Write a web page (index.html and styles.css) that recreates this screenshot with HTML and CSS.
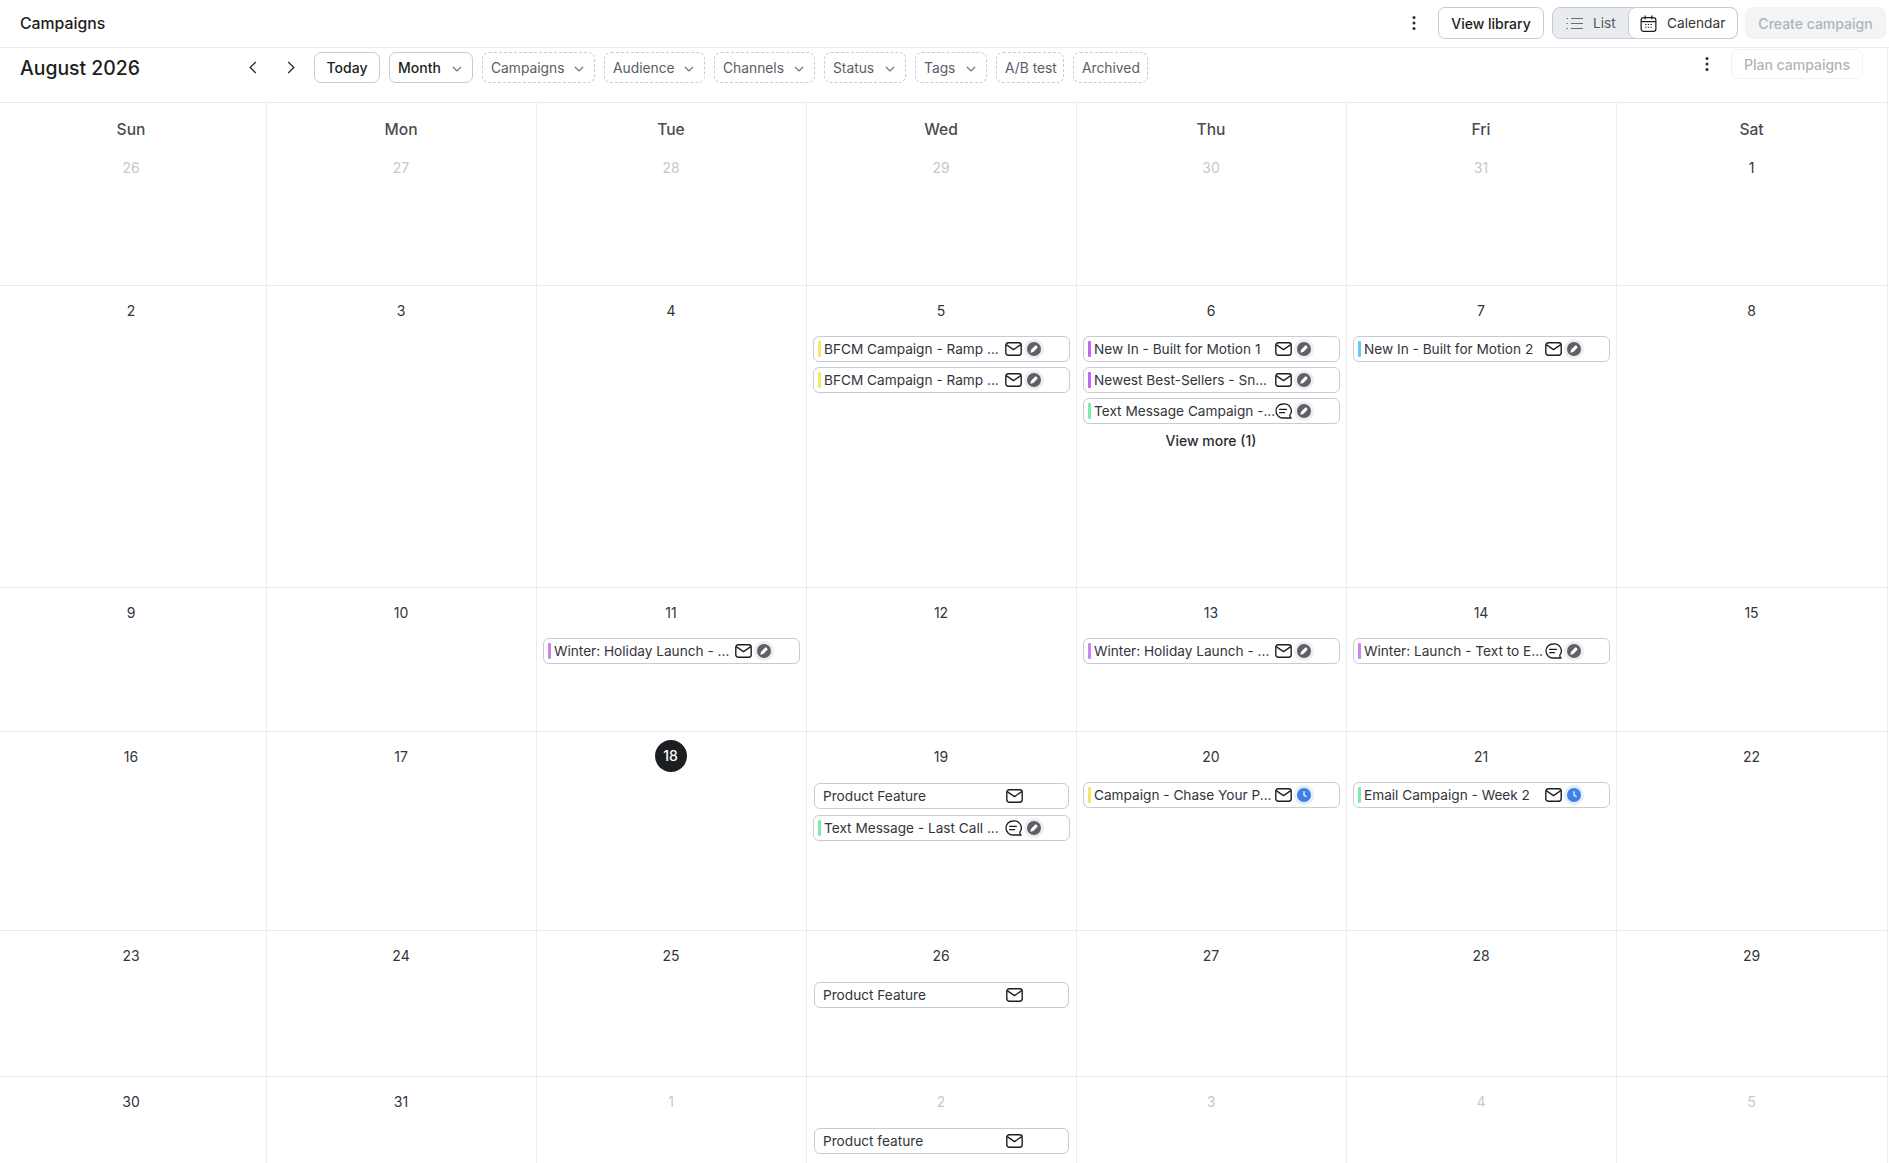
FILE: index.html
```html
<!DOCTYPE html>
<html lang="en">
<head>
  <meta charset="UTF-8">
  <title>Campaigns</title>
  <link rel="stylesheet" href="styles.css">
</head>
<body>

<!-- icon sprite -->
<svg class="sprite" aria-hidden="true">
  <symbol id="i-mail" viewBox="0 0 17 14">
    <rect x="0.8" y="0.8" width="15.4" height="12.4" rx="2.4" fill="none" stroke="currentColor" stroke-width="1.4"/>
    <path d="M1.2 2.6 8.5 7.6 15.8 2.6" fill="none" stroke="currentColor" stroke-width="1.3"/>
  </symbol>
  <symbol id="i-chat" viewBox="0 0 17 16">
    <path d="M8 1a7 7 0 1 0 0 14h8.2c-1.2-.6-1.6-1.6-1.4-2.8A7 7 0 0 0 8 1z" fill="none" stroke="currentColor" stroke-width="1.3" stroke-linejoin="round"/>
    <path d="M4.6 6.4h6.8M4.6 9.6h5" fill="none" stroke="currentColor" stroke-width="1.3" stroke-linecap="round"/>
  </symbol>
  <symbol id="i-draft" viewBox="0 0 20 20">
    <circle cx="10" cy="10" r="10" fill="#eceef1"/>
    <circle cx="10" cy="10" r="7" fill="#5e6066"/>
    <path d="M6.3 13.7l.8-3 3.9-3.9a1 1 0 0 1 1.5 0l.7.7a1 1 0 0 1 0 1.5l-3.9 3.9z" fill="#fff"/>
  </symbol>
  <symbol id="i-sched" viewBox="0 0 20 20">
    <circle cx="10" cy="10" r="10" fill="#e2eefc"/>
    <circle cx="10" cy="10" r="7" fill="#3f7fe6"/>
    <path d="M10 6.2v4l2.6 1.5" fill="none" stroke="#fff" stroke-width="1.3"/>
  </symbol>
  <symbol id="i-down" viewBox="0 0 10 6">
    <path d="M1 1l4 4 4-4" fill="none" stroke="currentColor" stroke-width="1.1"/>
  </symbol>
  <symbol id="i-dots" viewBox="0 0 4 16">
    <circle cx="2" cy="2.5" r="1.5"/><circle cx="2" cy="8" r="1.5"/><circle cx="2" cy="13.5" r="1.5"/>
  </symbol>
</svg>

<header class="topbar">
  <h1 class="page-title">Campaigns</h1>
  <div class="top-actions">
    <svg class="dots"><use href="#i-dots"/></svg>
    <button class="btn btn-strong lib-btn">View library</button>
    <div class="seg">
      <span class="seg-item">
        <svg class="seg-icon" viewBox="0 0 17 14"><path d="M5 2h12M5 7h12M5 12h12M0.5 2h1.5M0.5 7h1.5M0.5 12h1.5" fill="none" stroke="currentColor" stroke-width="1.2"/></svg>
        List
      </span>
      <span class="seg-item seg-on">
        <svg class="seg-icon" viewBox="0 0 17 18"><rect x="0.7" y="2.7" width="15.6" height="14.6" rx="2.5" fill="none" stroke="currentColor" stroke-width="1.3"/><path d="M0.7 7h15.6M5 0.5v4M12 0.5v4" fill="none" stroke="currentColor" stroke-width="1.3"/><path d="M5 10h1.4M7.8 10h1.4M10.6 10h1.4M5 13h1.4M7.8 13h1.4M10.6 13h1.4" fill="none" stroke="currentColor" stroke-width="1.2"/></svg>
        Calendar
      </span>
    </div>
    <button class="btn-create">Create campaign</button>
  </div>
</header>

<main class="panel">
  <div class="toolbar">
    <h2 class="month-title">August 2026</h2>
    <div class="pager">
      <svg class="arrow" viewBox="0 0 8 14"><path d="M7 1 1 7l6 6" fill="none" stroke="currentColor" stroke-width="1.4"/></svg>
      <svg class="arrow" viewBox="0 0 8 14"><path d="M1 1l6 6-6 6" fill="none" stroke="currentColor" stroke-width="1.4"/></svg>
    </div>
    <div class="filters">
      <button class="btn btn-strong btn-today">Today</button>
      <button class="btn btn-strong btn-month">Month <svg class="caret"><use href="#i-down"/></svg></button>
      <button class="chip chip-campaigns">Campaigns <svg class="caret"><use href="#i-down"/></svg></button>
      <button class="chip chip-audience">Audience <svg class="caret"><use href="#i-down"/></svg></button>
      <button class="chip chip-channels">Channels <svg class="caret"><use href="#i-down"/></svg></button>
      <button class="chip chip-status">Status <svg class="caret"><use href="#i-down"/></svg></button>
      <button class="chip chip-tags">Tags <svg class="caret"><use href="#i-down"/></svg></button>
      <button class="chip chip-ab">A/B test</button>
      <button class="chip chip-archived">Archived</button>
    </div>
    <div class="plan-side">
      <svg class="dots"><use href="#i-dots"/></svg>
      <button class="btn-plan">Plan campaigns</button>
    </div>
  </div>

  <div class="calendar">
    <div class="weekday">Sun</div>
    <div class="weekday">Mon</div>
    <div class="weekday">Tue</div>
    <div class="weekday">Wed</div>
    <div class="weekday">Thu</div>
    <div class="weekday">Fri</div>
    <div class="weekday">Sat</div>

    <div class="day first-week muted"><div class="num">26</div></div>
    <div class="day first-week muted"><div class="num">27</div></div>
    <div class="day first-week muted"><div class="num">28</div></div>
    <div class="day first-week muted"><div class="num">29</div></div>
    <div class="day first-week muted"><div class="num">30</div></div>
    <div class="day first-week muted"><div class="num">31</div></div>
    <div class="day first-week"><div class="num">1</div></div>

    <div class="day"><div class="num">2</div></div>
    <div class="day"><div class="num">3</div></div>
    <div class="day"><div class="num">4</div></div>
    <div class="day">
      <div class="num">5</div>
      <div class="events">
        <div class="event"><i class="bar yellow"></i><span class="name">BFCM Campaign - Ramp ...</span><svg class="ch"><use href="#i-mail"/></svg><svg class="st"><use href="#i-draft"/></svg></div>
        <div class="event"><i class="bar yellow"></i><span class="name">BFCM Campaign - Ramp ...</span><svg class="ch"><use href="#i-mail"/></svg><svg class="st"><use href="#i-draft"/></svg></div>
      </div>
    </div>
    <div class="day">
      <div class="num">6</div>
      <div class="events">
        <div class="event"><i class="bar purple"></i><span class="name">New In - Built for Motion 1</span><svg class="ch"><use href="#i-mail"/></svg><svg class="st"><use href="#i-draft"/></svg></div>
        <div class="event"><i class="bar purple"></i><span class="name">Newest Best-Sellers - Sn...</span><svg class="ch"><use href="#i-mail"/></svg><svg class="st"><use href="#i-draft"/></svg></div>
        <div class="event"><i class="bar green"></i><span class="name">Text Message Campaign -...</span><svg class="ch"><use href="#i-chat"/></svg><svg class="st"><use href="#i-draft"/></svg></div>
        <div class="more">View more (1)</div>
      </div>
    </div>
    <div class="day">
      <div class="num">7</div>
      <div class="events">
        <div class="event"><i class="bar blue"></i><span class="name">New In - Built for Motion 2</span><svg class="ch"><use href="#i-mail"/></svg><svg class="st"><use href="#i-draft"/></svg></div>
      </div>
    </div>
    <div class="day"><div class="num">8</div></div>

    <div class="day"><div class="num">9</div></div>
    <div class="day"><div class="num">10</div></div>
    <div class="day">
      <div class="num">11</div>
      <div class="events">
        <div class="event"><i class="bar lilac"></i><span class="name">Winter: Holiday Launch - ...</span><svg class="ch"><use href="#i-mail"/></svg><svg class="st"><use href="#i-draft"/></svg></div>
      </div>
    </div>
    <div class="day"><div class="num">12</div></div>
    <div class="day">
      <div class="num">13</div>
      <div class="events">
        <div class="event"><i class="bar lilac"></i><span class="name">Winter: Holiday Launch - ...</span><svg class="ch"><use href="#i-mail"/></svg><svg class="st"><use href="#i-draft"/></svg></div>
      </div>
    </div>
    <div class="day">
      <div class="num">14</div>
      <div class="events">
        <div class="event"><i class="bar lilac"></i><span class="name">Winter: Launch - Text to E...</span><svg class="ch"><use href="#i-chat"/></svg><svg class="st"><use href="#i-draft"/></svg></div>
      </div>
    </div>
    <div class="day"><div class="num">15</div></div>

    <div class="day"><div class="num">16</div></div>
    <div class="day"><div class="num">17</div></div>
    <div class="day"><div class="num today">18</div></div>
    <div class="day">
      <div class="num">19</div>
      <div class="events">
        <div class="event plain"><span class="name">Product Feature</span><svg class="ch"><use href="#i-mail"/></svg></div>
        <div class="event"><i class="bar green"></i><span class="name">Text Message - Last Call ...</span><svg class="ch"><use href="#i-chat"/></svg><svg class="st"><use href="#i-draft"/></svg></div>
      </div>
    </div>
    <div class="day">
      <div class="num">20</div>
      <div class="events">
        <div class="event"><i class="bar yellow"></i><span class="name">Campaign - Chase Your P...</span><svg class="ch"><use href="#i-mail"/></svg><svg class="st"><use href="#i-sched"/></svg></div>
      </div>
    </div>
    <div class="day">
      <div class="num">21</div>
      <div class="events">
        <div class="event"><i class="bar green"></i><span class="name">Email Campaign - Week 2</span><svg class="ch"><use href="#i-mail"/></svg><svg class="st"><use href="#i-sched"/></svg></div>
      </div>
    </div>
    <div class="day"><div class="num">22</div></div>

    <div class="day"><div class="num">23</div></div>
    <div class="day"><div class="num">24</div></div>
    <div class="day"><div class="num">25</div></div>
    <div class="day">
      <div class="num">26</div>
      <div class="events">
        <div class="event plain"><span class="name">Product Feature</span><svg class="ch"><use href="#i-mail"/></svg></div>
      </div>
    </div>
    <div class="day"><div class="num">27</div></div>
    <div class="day"><div class="num">28</div></div>
    <div class="day"><div class="num">29</div></div>

    <div class="day"><div class="num">30</div></div>
    <div class="day"><div class="num">31</div></div>
    <div class="day muted"><div class="num">1</div></div>
    <div class="day muted">
      <div class="num">2</div>
      <div class="events">
        <div class="event plain"><span class="name">Product feature</span><svg class="ch"><use href="#i-mail"/></svg></div>
      </div>
    </div>
    <div class="day muted"><div class="num">3</div></div>
    <div class="day muted"><div class="num">4</div></div>
    <div class="day muted"><div class="num">5</div></div>
  </div>
</main>

</body>
</html>
```

FILE: styles.css
```css
* {
  box-sizing: border-box;
  margin: 0;
  padding: 0;
}
html, body {
  height: 1163px;
  overflow: hidden;
}
body {
  font-family: 'Inter', 'Liberation Sans', sans-serif;
  font-size: 14px;
  color: #2b2c30;
  background: #fff;
}
button {
  font-family: inherit;
  font-size: 14px;
  background: #fff;
  white-space: nowrap;
}
.sprite {
  display: none;
}

/* top bar */
.topbar {
  height: 48px;
  display: flex;
  align-items: flex-start;
  justify-content: space-between;
  border-bottom: 1px solid #e8ebef;
}
.page-title {
  font-size: 15.8px;
  font-weight: 500;
  color: #1d1e21;
  line-height: 20px;
  padding: 14px 0 0 20px;
}
.top-actions {
  display: flex;
  align-items: center;
  padding: 7px 3px 0 0;
}
.dots {
  width: 4px;
  height: 16px;
  fill: #2b2c30;
}
.top-actions .dots {
  margin-right: 22px;
}
.btn {
  height: 31px;
  padding: 0 12px;
  border: 1px solid #c7cbd3;
  border-radius: 7px;
  color: #1d1e21;
  display: inline-flex;
  align-items: center;
}
.btn-strong {
  font-weight: 500;
}
.lib-btn {
  width: 106px;
  height: 32px;
  justify-content: center;
}
.seg {
  display: flex;
  height: 32px;
  width: 186px;
  margin-left: 8px;
  background: #e9ecef;
  border: 1px solid #c7cbd3;
  border-radius: 8px;
  font-size: 13.7px;
}
.seg-item {
  display: flex;
  align-items: center;
  gap: 10px;
  padding-left: 13px;
  width: 75px;
  color: #55585e;
}
.seg-on {
  flex: 1;
  gap: 10px;
  padding-left: 11px;
  margin: -1px -1px -1px 0;
  background: #fff;
  border: 1px solid #c7cbd3;
  border-radius: 8px;
  color: #33353a;
}
.seg-icon {
  width: 17px;
  height: 17px;
  color: #6b6e75;
}
.seg-on .seg-icon {
  color: #1d1e21;
}
.btn-create {
  width: 141px;
  height: 32px;
  margin-left: 7px;
  border: none;
  border-radius: 7px;
  background: #f2f4f5;
  color: #b0b5bc;
  font-weight: 500;
}

/* month toolbar */
.panel {
  width: 1888px;
  height: 1115px;
  border-right: 1px solid #e8ebef;
  overflow: hidden;
}
.toolbar {
  height: 55px;
  display: flex;
  align-items: flex-start;
  padding-top: 4px;
  border-bottom: 1px solid #e8ebef;
}
.month-title {
  width: 228px;
  padding-left: 20px;
  font-size: 19.4px;
  font-weight: 500;
  line-height: 33px;
  color: #1d1e21;
}
.pager {
  display: flex;
  align-items: center;
  gap: 30px;
  height: 31px;
  width: 86px;
  padding-left: 21px;
  color: #2b2c30;
}
.arrow {
  width: 8px;
  height: 13px;
}
.filters {
  display: flex;
  gap: 9px;
}
.btn-today {
  width: 66px;
  justify-content: center;
}
.btn-month {
  width: 84px;
  gap: 11px;
  padding: 0 8px;
}
.chip {
  height: 31px;
  padding: 0 8px;
  display: inline-flex;
  align-items: center;
  justify-content: space-between;
  border: 1px dashed #c7cbd3;
  border-radius: 7px;
  font-size: 13.8px;
  color: #5a5d64;
}
.chip-campaigns { width: 113px; }
.chip-audience { width: 101px; }
.chip-channels { width: 101px; }
.chip-status { width: 82px; }
.chip-tags { width: 72px; }
.chip-ab { width: 68px; }
.chip-archived { width: 75px; }
.caret {
  width: 10px;
  height: 6px;
  color: #6b6e75;
  margin-right: 2px;
  margin-top: 2px;
}
.plan-side {
  margin-left: auto;
  display: flex;
  align-items: center;
  gap: 22px;
  padding-right: 24px;
  margin-top: -3px;
}
.btn-plan {
  width: 132px;
  height: 30px;
  border: 1px solid #f0f1f3;
  border-radius: 7px;
  color: #b0b5bc;
  font-weight: 500;
}

/* calendar grid */
.calendar {
  display: grid;
  grid-template-columns: repeat(7, 270px);
  grid-template-rows: 46px 137px 302px 144px 199px 146px 90px;
  margin-left: -3px;
}
.weekday {
  text-align: center;
  font-size: 15.6px;
  font-weight: 500;
  line-height: 20px;
  padding: 16.5px 1px 0 0;
  color: #4a4c50;
  border-right: 1px solid #e8ebef;
}
.day {
  padding-top: 15px;
  border-right: 1px solid #e8ebef;
  border-bottom: 1px solid #e8ebef;
  min-width: 0;
}
.weekday:nth-child(7), .day:nth-child(7n) {
  border-right: none;
}
.first-week {
  padding-top: 9px;
}
.num {
  text-align: center;
  line-height: 20px;
  padding-right: 1px;
  color: #33353a;
}
.muted .num {
  color: #c5c8cd;
}
.num.today {
  width: 32px;
  height: 32px;
  line-height: 32px;
  padding-right: 0;
  margin: -7px auto 0;
  border-radius: 50%;
  background: #1d1e21;
  color: #fff;
  font-weight: 500;
  position: relative;
  left: -1px;
}

/* campaign cards */
.events {
  display: flex;
  flex-direction: column;
  gap: 5px;
  margin-top: 15px;
  padding: 0 6px 0 6px;
}
.event {
  height: 26px;
  flex: none;
  display: flex;
  align-items: center;
  border: 1px solid #c7cbd3;
  border-radius: 6px;
  background: #fff;
  padding-left: 4px;
  font-size: 13.65px;
  color: #33353a;
  white-space: nowrap;
}
.event.plain {
  margin: 1px 1px 1px;
  padding-left: 8px;
}
.bar {
  width: 3px;
  height: 16px;
  border-radius: 1px;
  margin-right: 3px;
  flex: none;
}
.yellow { background: #f5e56b; }
.purple { background: #c365f2; }
.lilac { background: #cb85f0; }
.green { background: #7deca8; }
.blue { background: #5fcdf5; }
.name {
  width: 181px;
  flex: none;
}
.plain .name {
  width: 183px;
}
.ch {
  width: 17px;
  height: 16px;
  flex: none;
  color: #1d1e21;
}
.st {
  width: 20px;
  height: 20px;
  flex: none;
  margin-left: 2px;
}
.more {
  text-align: center;
  font-weight: 500;
  line-height: 20px;
  margin-top: 2px;
  padding-right: 1px;
  color: #2b2c30;
}
```
